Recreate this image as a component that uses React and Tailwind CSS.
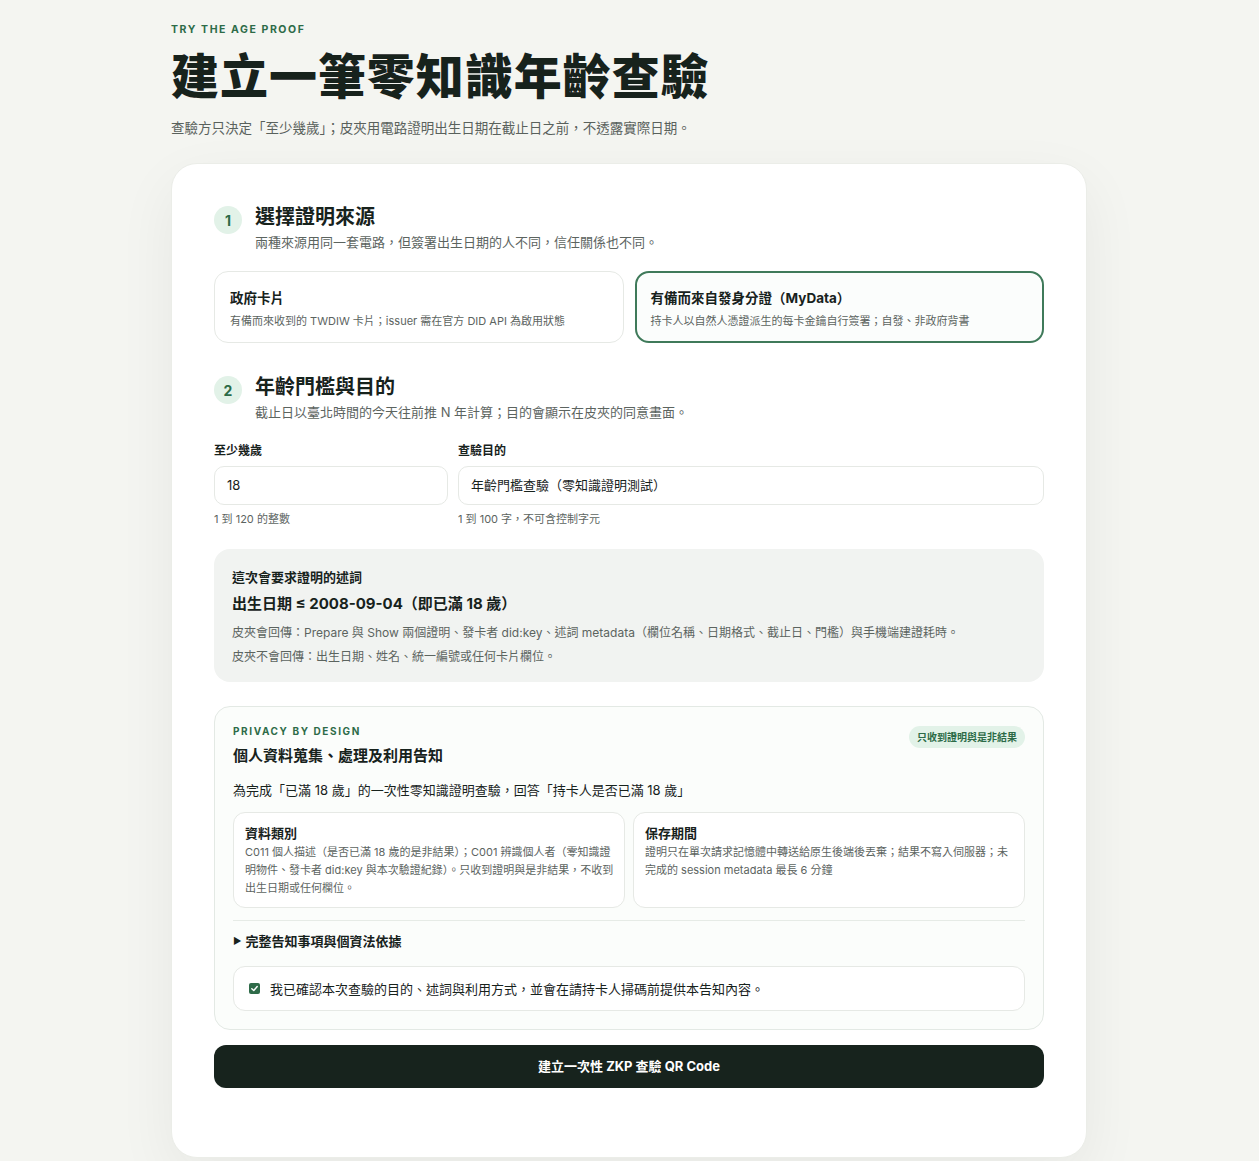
import React from "react";

const font = { fontFamily: 'Inter, "Noto Sans CJK TC", sans-serif' };

function Step({ n, title, desc }) {
  return (
    <div className="flex gap-[13px]">
      <div className="w-[28px] h-[28px] mt-[-7px] rounded-full bg-[#e2f2e8] text-[#2c6b47] text-[14px] font-bold flex items-center justify-center shrink-0">
        {n}
      </div>
      <div>
        <h2 className="text-[20px] leading-[26px] font-bold text-[#17221c] mt-[-9px]">{title}</h2>
        <p className="text-[13px] leading-[20px] text-[#5c645f] mt-[2px]">{desc}</p>
      </div>
    </div>
  );
}

export default function App() {
  return (
    <div className="min-h-[1161px] bg-[#f4f5f1] text-[#17221c]" style={font}>
      <div className="w-[916px] pt-[24px]" style={{ marginLeft: 171 }}>
        <div className="text-[10.5px] leading-[12px] font-bold tracking-[0.15em] text-[#2d6b48]">TRY THE AGE PROOF</div>
        <h1 className="text-[48px] leading-[64px] font-black text-[#17221c] mt-[9px] tracking-[0.02em]">建立一筆零知識年齡查驗</h1>
        <p className="text-[13.5px] leading-[20px] text-[#59615c] mt-[9px]">
          查驗方只決定「至少幾歲」；皮夾用電路證明出生日期在截止日之前，不透露實際日期。
        </p>

        <div className="mt-[25px] bg-white rounded-[26px] border border-[#ebede8] shadow-[0_20px_60px_rgba(30,40,30,0.06)] px-[42px] pt-[49px] pb-[69px]">
          <Step n="1" title="選擇證明來源" desc="兩種來源用同一套電路，但簽署出生日期的人不同，信任關係也不同。" />

          <div className="grid grid-cols-2 gap-[11px] mt-[19px]">
            <div className="h-[72px] rounded-[14px] border border-[#e6e9e5] bg-white px-[15px] pt-[16px]">
              <div className="text-[13.5px] leading-[20px] font-bold text-[#17221c]">政府卡片</div>
              <div className="text-[11px] leading-[16px] text-[#5c645f] mt-[5px]">有備而來收到的 TWDIW 卡片；issuer 需在官方 DID API 為啟用狀態</div>
            </div>
            <div className="h-[72px] rounded-[14px] border-2 border-[#3f7a5a] bg-[#fbfdfc] px-[14px] pt-[15px]">
              <div className="text-[13.5px] leading-[20px] font-bold text-[#17221c]">有備而來自發身分證（MyData）</div>
              <div className="text-[11px] leading-[16px] text-[#5c645f] mt-[5px]">持卡人以自然人憑證派生的每卡金鑰自行簽署；自發、非政府背書</div>
            </div>
          </div>

          <div className="mt-[40px]">
            <Step n="2" title="年齡門檻與目的" desc="截止日以臺北時間的今天往前推 N 年計算；目的會顯示在皮夾的同意畫面。" />
          </div>

          <div className="grid grid-cols-[234px_1fr] gap-[10px] mt-[20px]">
            <div>
              <div className="text-[12px] leading-[18px] font-bold text-[#17221c]">至少幾歲</div>
              <div className="mt-[6px] h-[39px] rounded-[10px] border border-[#e6e9e5] bg-white flex items-center px-[12px] text-[13px] text-[#17221c]">18</div>
              <div className="text-[11px] leading-[16px] text-[#5c645f] mt-[6px]">1 到 120 的整數</div>
            </div>
            <div>
              <div className="text-[12px] leading-[18px] font-bold text-[#17221c]">查驗目的</div>
              <div className="mt-[6px] h-[39px] rounded-[10px] border border-[#e6e9e5] bg-white flex items-center px-[12px] text-[13px] text-[#17221c]">年齡門檻查驗（零知識證明測試）</div>
              <div className="text-[11px] leading-[16px] text-[#5c645f] mt-[6px]">1 到 100 字，不可含控制字元</div>
            </div>
          </div>

          <div className="mt-[22px] rounded-[16px] bg-[#f1f3f1] px-[18px] pt-[19px] pb-[16px]">
            <div className="text-[13px] leading-[18px] font-bold text-[#17221c]">這次會要求證明的述詞</div>
            <div className="text-[15px] leading-[22px] font-bold text-[#17221c] mt-[7px]">出生日期 ≤ 2008-09-04（即已滿 18 歲）</div>
            <div className="text-[12px] leading-[18px] text-[#5c645f] mt-[9px]">皮夾會回傳：Prepare 與 Show 兩個證明、發卡者 did:key、述詞 metadata（欄位名稱、日期格式、截止日、門檻）與手機端建證耗時。</div>
            <div className="text-[12px] leading-[18px] text-[#5c645f] mt-[6px]">皮夾不會回傳：出生日期、姓名、統一編號或任何卡片欄位。</div>
          </div>

          <div className="mt-[24px] rounded-[16px] border border-[#e3e9e4] bg-[#fbfdfb] px-[18px] pt-[17px] pb-[18px]">
            <div className="flex justify-between items-start">
              <div>
                <div className="text-[10px] leading-[14px] font-bold tracking-[0.16em] text-[#2d6b48]">PRIVACY BY DESIGN</div>
                <div className="text-[15px] leading-[22px] font-bold text-[#17221c] mt-[7px]">個人資料蒐集、處理及利用告知</div>
              </div>
              <div className="mt-[2px] h-[22px] px-[8px] rounded-full bg-[#e2f2e8] text-[#2c6b47] text-[10px] font-bold flex items-center">只收到證明與是非結果</div>
            </div>
            <div className="text-[13px] leading-[20px] text-[#17221c] mt-[13px]">為完成「已滿 18 歲」的一次性零知識證明查驗，回答「持卡人是否已滿 18 歲」</div>

            <div className="grid grid-cols-2 gap-[8px] mt-[12px]">
              <div className="h-[96px] rounded-[12px] border border-[#e6e9e5] bg-white pl-[11px] pr-[9px] pt-[11px]">
                <div className="text-[13px] leading-[18px] font-bold text-[#17221c]">資料類別</div>
                <div className="text-[11px] leading-[18px] text-[#5c645f] mt-[1px]">C011 個人描述（是否已滿 18 歲的是非結果）；C001 辨識個人者（零知識證明物件、發卡者 did:key 與本次驗證紀錄）。只收到證明與是非結果，不收到出生日期或任何欄位。</div>
              </div>
              <div className="h-[96px] rounded-[12px] border border-[#e6e9e5] bg-white pl-[11px] pr-[9px] pt-[11px]">
                <div className="text-[13px] leading-[18px] font-bold text-[#17221c]">保存期間</div>
                <div className="text-[11px] leading-[18px] text-[#5c645f] mt-[1px]">證明只在單次請求記憶體中轉送給原生後端後丟棄；結果不寫入伺服器；未完成的 session metadata 最長 6 分鐘</div>
              </div>
            </div>

            <div className="border-t border-[#e6ebe6] mt-[12px] pt-[11px]">
              <div className="flex items-center gap-[4px] text-[13px] leading-[18px] font-bold text-[#17221c]">
                <span className="text-[9px]">▶</span>
                <span>完整告知事項與個資法依據</span>
              </div>
            </div>

            <div className="mt-[16px] h-[45px] rounded-[12px] border border-[#e6e9e5] bg-white flex items-center px-[15px] gap-[10px]">
              <span className="w-[11px] h-[11px] rounded-[2px] bg-[#2f6b49] flex items-center justify-center">
                <svg width="9" height="9" viewBox="0 0 10 10">
                  <path d="M2 5.2 L4.2 7.3 L8 2.8" fill="none" stroke="white" strokeWidth="1.6" strokeLinecap="round" strokeLinejoin="round" />
                </svg>
              </span>
              <span className="text-[13px] leading-[18px] text-[#17221c]">我已確認本次查驗的目的、述詞與利用方式，並會在請持卡人掃碼前提供本告知內容。</span>
            </div>
          </div>

          <button className="mt-[15px] w-full h-[43px] rounded-[12px] bg-[#17231d] text-white text-[13px] font-bold">
            建立一次性 ZKP 查驗 QR Code
          </button>
        </div>
      </div>
    </div>
  );
}
